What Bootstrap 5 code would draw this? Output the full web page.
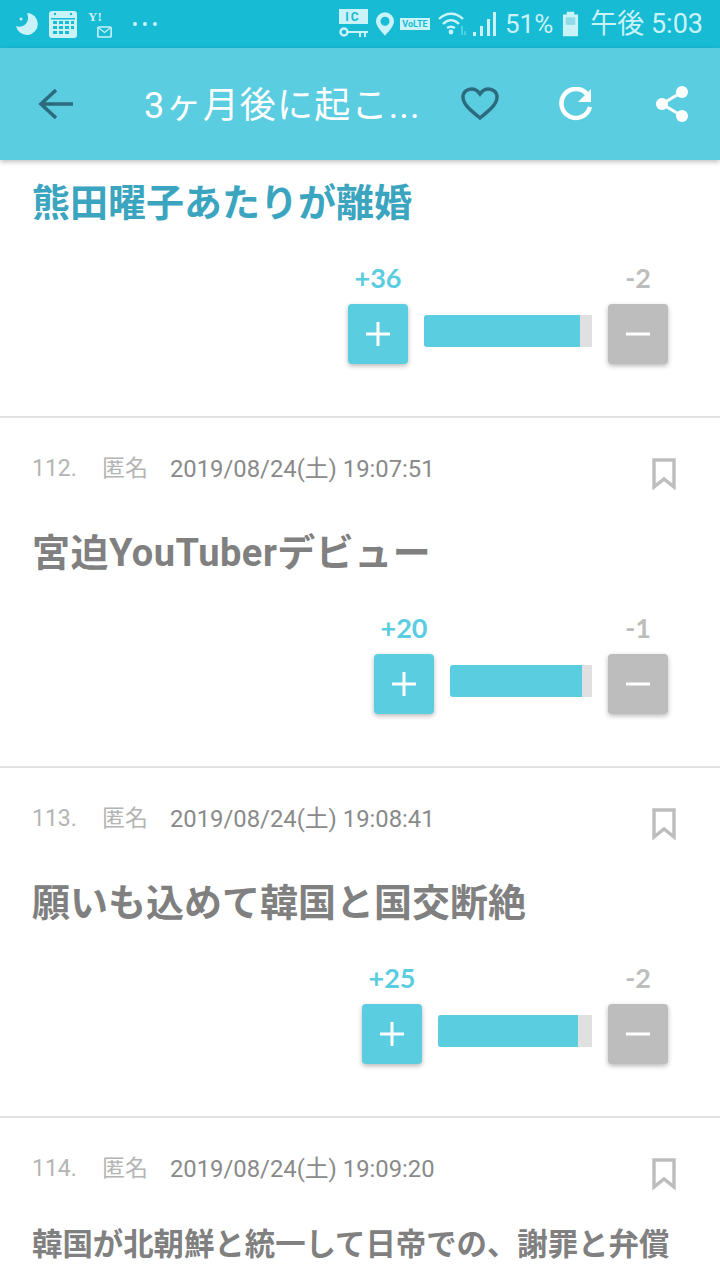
<!DOCTYPE html>
<html lang="ja">
<head>
  <meta charset="UTF-8">
  <meta name="viewport" content="width=device-width, initial-scale=1.0">
  <title>3ヶ月後に起こ...</title>
  <link href="https://cdn.jsdelivr.net/npm/bootstrap@5.3.0/dist/css/bootstrap.min.css" rel="stylesheet">
  <style>
    html, body { height: 1280px; overflow: hidden; }
    body { font-family: Roboto, "Noto Sans CJK JP", sans-serif; background: #fff; }
    .status-bar { height: 48px; background: #17bbd4; color: #c9f3f9; font-size: 26px; padding: 0 17px 0 15px; }
    .status-bar svg { display: block; flex: none; }
    .gap-cal { margin-left: 10px; }
    .gap-mail { margin-left: 11px; }
    .gap-dots { margin-left: 20px; }
    .gap-pin { margin-left: 8px; }
    .gap-volte { margin-left: 6px; }
    .gap-wifi { margin-left: 8px; }
    .gap-signal { margin-left: 4px; }
    .gap-pct { margin-left: 9px; }
    .gap-batt { margin-left: 9px; }
    .mail-icon { width: 24px; height: 28px; font: 700 13px/14px "Liberation Serif", serif; }
    .mail-icon svg { right: 0; bottom: 0; }
    .volte-icon { width: 30px; height: 12px; background: #c9f3f9; color: #17bbd4; font: 700 9px/12px Roboto, sans-serif; }
    .status-clock { font-size: 27px; margin-left: 11px; }
    .app-bar { height: 112px; background: #5bcde0; box-shadow: 0 2px 5px rgba(0,0,0,.25); position: relative; z-index: 2; }
    .app-title { width: 284px; margin-left: 70px; padding-top: 4px; color: #fff; font-size: 36px; letter-spacing: 1.2px; white-space: nowrap; }
    .gap-back { margin-left: 38px; }
    .gap-heart { margin-left: 33px; }
    .gap-refresh { margin-left: 60px; }
    .gap-share { margin-left: 62px; }
    .entry { padding: 0 32px 53px; border-bottom: 2px solid #e2e2e2; height: 350px; }
    .entry-first { height: 258px; padding-top: 15px; }
    .entry-last { height: auto; padding-bottom: 0; border-bottom: 0; }
    .entry-head { padding-top: 35px; height: 107px; }
    .entry-meta { font-size: 23px; line-height: 32px; color: #b4b4b4; }
    .entry-no { width: 70px; }
    .entry-name { width: 68px; }
    .entry-date { color: #8a8a8a; font-size: 23.8px; }
    .mark-icon { margin: 5px 12px 0 0; }
    .entry-text { font-size: 38px; line-height: 56px; font-weight: 700; color: #808080; white-space: nowrap; }
    .entry-text.hot { color: #3ba5bf; }
    .entry-text.wide { letter-spacing: .5px; }
    .entry-text.sm { font-size: 30.4px; line-height: 40px; }
    .vote-wrap { margin: 30px 20px 0 0; }
    .vote-col { width: 60px; }
    .vote-num { font-family: Lato, sans-serif; font-weight: 700; font-size: 27px; line-height: 34px; margin-bottom: 9px; text-align: center; white-space: nowrap; }
    .vote-btn { width: 60px; height: 60px; border-radius: 4px; box-shadow: 0 2px 5px rgba(0,0,0,.28); }
    .vote-plus .vote-num { color: #5bcde0; }
    .vote-plus .vote-btn { background: #5bcde0; }
    .vote-minus .vote-num { color: #bdbdbd; }
    .vote-minus .vote-btn { background: #bdbdbd; }
    .vote-bar { height: 32px; background: #e0e0e0; border-radius: 3px 0 0 3px; margin: 54px 16px 0; overflow: hidden; }
    .vote-fill { height: 100%; background: #5bcde0; }
  </style>
</head>
<body>
  <div class="status-bar d-flex align-items-center">
    <svg width="24" height="24" viewBox="0 0 24 24"><path d="M12 1a11 11 0 1 1-11 13c7 3 15-4 11-13z" fill="#c9f3f9"/><circle cx="6" cy="7" r="1.5" fill="#c9f3f9"/></svg>
    <svg class="gap-cal" width="28" height="28" viewBox="0 0 28 28"><rect x="0" y="1" width="28" height="27" rx="3" fill="#c9f3f9"/><g fill="#17bbd4"><rect x="2" y="8" width="24" height="1.5"/><rect x="4" y="11" width="4" height="3"/><rect x="10" y="11" width="4" height="3"/><rect x="16" y="11" width="4" height="3"/><rect x="22" y="11" width="3" height="3"/><rect x="4" y="16" width="4" height="3"/><rect x="10" y="16" width="4" height="3"/><rect x="16" y="16" width="4" height="3"/><rect x="22" y="16" width="3" height="3"/><rect x="4" y="21" width="4" height="3"/><rect x="10" y="21" width="4" height="3"/><rect x="16" y="21" width="4" height="3"/><circle cx="6" cy="4" r="1.2"/><circle cx="22" cy="4" r="1.2"/></g></svg>
    <span class="mail-icon gap-mail position-relative">Y!<svg class="position-absolute" width="15" height="12" viewBox="0 0 14 11"><rect x=".8" y=".8" width="12.400" height="9.400" rx="1" fill="none" stroke="#c9f3f9" stroke-width="1.500"/><path d="M2 2l5 4 5-4" fill="none" stroke="#c9f3f9" stroke-width="1.200"/></svg></span>
    <svg class="gap-dots" width="26" height="6" viewBox="0 0 26 6"><circle cx="3" cy="3" r="2" fill="#c9f3f9"/><circle cx="13" cy="3" r="2" fill="#c9f3f9"/><circle cx="23" cy="3" r="2" fill="#c9f3f9"/></svg>
    <div class="ms-auto d-flex align-items-center">
      <svg width="29" height="30" viewBox="0 0 29 30"><rect x="0" y="0" width="29" height="15" fill="#c9f3f9"/><text x="14" y="12" font-family="Roboto" font-weight="700" font-size="12" text-anchor="middle" fill="#17bbd4" letter-spacing="2">IC</text><circle cx="5" cy="23" r="3.500" fill="none" stroke="#c9f3f9" stroke-width="2.500"/><path d="M9 22h20v2H9zM20 24h2v4h-2zM25 24h2v4h-2z" fill="#c9f3f9"/></svg>
      <svg class="gap-pin" width="18" height="26" viewBox="0 0 20 26"><path d="M10 0a10 10 0 0 0-10 10c0 6 7 12 10 16 3-4 10-10 10-16a10 10 0 0 0-10-10zm0 5a5 5 0 1 1 0 10 5 5 0 0 1 0-10z" fill="#c9f3f9" fill-rule="evenodd"/></svg>
      <span class="volte-icon gap-volte text-center">VoLTE</span>
      <svg class="gap-wifi" width="30" height="26" viewBox="0 0 30 26"><g fill="none" stroke="#c9f3f9" stroke-width="2.400"><path d="M1 8c7-7 17-7 24 0"/><path d="M5 13c5-5 11-5 16 0"/><path d="M9 17c3-2 5-2 8 0"/></g><circle cx="13" cy="21" r="2.400" fill="#c9f3f9"/><path d="M24 15v9M27 20v4" stroke="#4fd0e4" stroke-width="2"/></svg>
      <svg class="gap-signal" width="24" height="26" viewBox="0 0 24 26"><path d="M1 21h3v4H1zM8 15h3v10H8zM15 8h3v17h-3zM21 1h3v24h-3z" fill="#c9f3f9"/></svg>
      <span class="gap-pct">51%</span>
      <svg class="gap-batt" width="17" height="26" viewBox="0 0 18 26"><path d="M5 0h8v3h4v23H1V3h4z" fill="#c9f3f9"/><rect x="4" y="6" width="10" height="8" fill="#8fdce8"/></svg>
      <span class="status-clock">午後 5:03</span>
    </div>
  </div>

  <div class="app-bar d-flex align-items-center">
    <svg class="gap-back" width="36" height="34" viewBox="0 0 36 34"><path d="M18 3L3 17l15 14M3 17h32" fill="none" stroke="#2c6a7d" stroke-width="3.600"/></svg>
    <div class="app-title">3ヶ月後に起こ...</div>
    <svg class="gap-heart" width="38" height="34" viewBox="0 0 38 34"><path d="M19 31C8 22 2 17 2 10 2 5 6 2 10.500 2c3.500 0 6.500 2 8.500 5 2-3 5-5 8.500-5C32 2 36 5 36 10c0 7-6 12-17 21z" fill="none" stroke="#2c6a7d" stroke-width="3.400"/></svg>
    <svg class="gap-refresh" width="34" height="34" viewBox="0 0 34 34"><path d="M28 7A14.500 14.500 0 1 0 31 20" fill="none" stroke="#fff" stroke-width="4.500"/><path d="M32 2v13H19z" fill="#fff"/></svg>
    <svg class="gap-share" width="34" height="36" viewBox="0 0 34 36"><path d="M27 6L7 18l20 12" fill="none" stroke="#fff" stroke-width="3"/><circle cx="27" cy="6" r="6" fill="#fff"/><circle cx="7" cy="18" r="6" fill="#fff"/><circle cx="27" cy="30" r="6" fill="#fff"/></svg>
  </div>

  <div id="entries"></div>

  <script>
    const items = [
      { no: 111, text: '熊田曜子あたりが離婚', up: 36, down: 2, bar: 168, cls: 'hot', first: true },
      { no: 112, date: '2019/08/24(土) 19:07:51', text: '宮迫YouTuberデビュー', up: 20, down: 1, bar: 142, cls: 'wide' },
      { no: 113, date: '2019/08/24(土) 19:08:41', text: '願いも込めて韓国と国交断絶', up: 25, down: 2, bar: 154 },
      { no: 114, date: '2019/08/24(土) 19:09:20', text: '韓国が北朝鮮と統一して日帝での、謝罪と弁償', bar: 0, cls: 'sm', last: true }
    ];

    const plusSvg = '<svg width="26" height="26" viewBox="0 0 26 26"><path d="M13 1v24M1 13h24" stroke="#fff" stroke-width="3"/></svg>';
    const minusSvg = '<svg width="26" height="26" viewBox="0 0 26 26"><path d="M1 13h24" stroke="#fff" stroke-width="3"/></svg>';
    const markSvg = '<svg class="mark-icon" width="24" height="32" viewBox="0 0 24 32"><path d="M2 2h20v27l-10-8-10 8z" fill="none" stroke="#bdbdbd" stroke-width="3.400"/></svg>';

    document.getElementById('entries').innerHTML = items.map(it => {
      const head = it.first ? '' : `
        <div class="entry-head d-flex justify-content-between align-items-start">
          <div class="entry-meta d-flex"><span class="entry-no">${it.no}.</span><span class="entry-name">匿名</span><span class="entry-date">${it.date}</span></div>
          ${markSvg}
        </div>`;
      const votes = !it.bar ? '' : `
        <div class="vote-wrap d-flex justify-content-end">
          <div class="vote-col vote-plus"><div class="vote-num">+${it.up}</div><div class="vote-btn d-flex align-items-center justify-content-center">${plusSvg}</div></div>
          <div class="vote-bar" style="width:${it.bar}px"><div class="vote-fill" style="width:${Math.round(it.bar * it.up / (it.up + it.down) - 3)}px"></div></div>
          <div class="vote-col vote-minus"><div class="vote-num">-${it.down}</div><div class="vote-btn d-flex align-items-center justify-content-center">${minusSvg}</div></div>
        </div>`;
      return `<div class="entry ${it.first ? 'entry-first' : ''} ${it.last ? 'entry-last' : ''}">${head}
        <div class="entry-text ${it.cls || ''}">${it.text}</div>${votes}</div>`;
    }).join('');
  </script>
  <script src="https://cdn.jsdelivr.net/npm/bootstrap@5.3.0/dist/js/bootstrap.bundle.min.js"></script>
</body>
</html>
